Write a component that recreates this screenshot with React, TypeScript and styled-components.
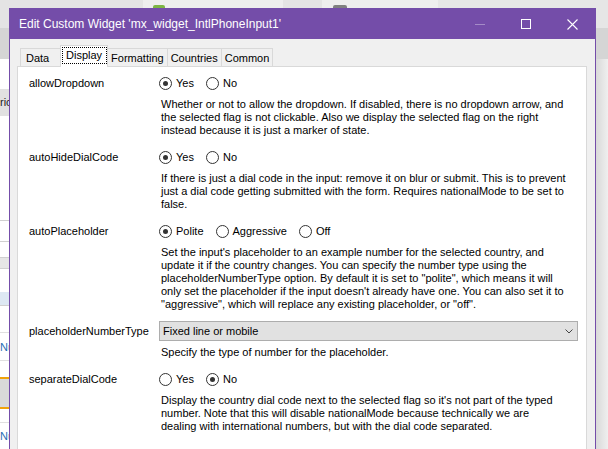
import styled, { createGlobalStyle } from "styled-components";

const GlobalStyle = createGlobalStyle`
    *, *::before, *::after {
        box-sizing: border-box;
    }
    html, body {
        margin: 0;
        padding: 0;
    }
    body {
        background: #e9e9e9;
        font-family: "Liberation Sans", Arial, sans-serif;
        font-size: 11px;
        color: #000;
        overflow: hidden;
    }
`;

type RadioControl = { kind: "radio"; options: string[]; value: string };
type SelectControl = { kind: "select"; value: string };

type Field = {
    name: string;
    control: RadioControl | SelectControl;
    help: string[];
};

const fields: Field[] = [
    {
        name: "allowDropdown",
        control: { kind: "radio", options: ["Yes", "No"], value: "Yes" },
        help: [
            "Whether or not to allow the dropdown. If disabled, there is no dropdown arrow, and",
            "the selected flag is not clickable. Also we display the selected flag on the right",
            "instead because it is just a marker of state.",
        ],
    },
    {
        name: "autoHideDialCode",
        control: { kind: "radio", options: ["Yes", "No"], value: "Yes" },
        help: [
            "If there is just a dial code in the input: remove it on blur or submit. This is to prevent",
            "just a dial code getting submitted with the form. Requires nationalMode to be set to",
            "false.",
        ],
    },
    {
        name: "autoPlaceholder",
        control: {
            kind: "radio",
            options: ["Polite", "Aggressive", "Off"],
            value: "Polite",
        },
        help: [
            "Set the input's placeholder to an example number for the selected country, and",
            "update it if the country changes. You can specify the number type using the",
            'placeholderNumberType option. By default it is set to "polite", which means it will',
            "only set the placeholder if the input doesn't already have one. You can also set it to",
            '"aggressive", which will replace any existing placeholder, or "off".',
        ],
    },
    {
        name: "placeholderNumberType",
        control: { kind: "select", value: "Fixed line or mobile" },
        help: ["Specify the type of number for the placeholder."],
    },
    {
        name: "separateDialCode",
        control: { kind: "radio", options: ["Yes", "No"], value: "No" },
        help: [
            "Display the country dial code next to the selected flag so it's not part of the typed",
            "number. Note that this will disable nationalMode because technically we are",
            "dealing with international numbers, but with the dial code separated.",
        ],
    },
];

const tabs = ["Data", "Display", "Formatting", "Countries", "Common"];

/* ---------- the application behind the dialog ---------- */

const Desktop = styled.div`
    position: relative;
    width: 608px;
    height: 449px;
    overflow: hidden;
`;

const Backdrop = styled.div`
    display: flex;
    flex-direction: column;
    height: 100%;
`;

const AppTopBar = styled.div`
    height: 30px;
    display: flex;
    align-items: flex-start;
    padding-top: 5px;
    background: linear-gradient(
        to right,
        #e4e4e4 0 143px,
        #eeeeee 143px 283px,
        #e4e4e4 283px 322px,
        #eeeeee 322px 438px,
        #e6e6e6 438px
    );
`;

const Marker = styled.div<{ $color: string; $width: number; $offset: number }>`
    width: ${(p) => p.$width}px;
    height: 4px;
    margin-left: ${(p) => p.$offset}px;
    border-radius: 2px 2px 0 0;
    background: ${(p) => p.$color};
`;

const AppRibbon = styled.div`
    height: 33px;
    background: #d5d5d5;
`;

const AppMain = styled.div`
    flex: 1;
    display: flex;
`;

const SidePanel = styled.div`
    width: 200px;
    display: flex;
    flex-direction: column;
    background: #fff;
`;

const SideRow = styled.div<{ $h: number; $bg?: string; $line?: string; $color?: string }>`
    height: ${(p) => p.$h}px;
    flex-shrink: 0;
    background: ${(p) => p.$bg || "#fff"};
    border-bottom: ${(p) => (p.$line ? `1px solid ${p.$line}` : "none")};
    color: ${(p) => p.$color || "#222"};
    line-height: ${(p) => p.$h}px;
    white-space: nowrap;
`;

const Canvas = styled.div`
    flex: 1;
    background: linear-gradient(
        to right,
        #f0f0f0 0,
        #f0f0f0 calc(100% - 12px),
        #d9d9d9 calc(100% - 12px),
        #efefef 100%
    );
`;

/* ---------- the dialog window ---------- */

const Window = styled.div`
    position: absolute;
    left: 9px;
    top: 8px;
    width: 587px;
    height: 460px;
    border: 1px solid #744da9;
    border-bottom: none;
    background: #f0f0f0;
    display: flex;
    flex-direction: column;
`;

const TitleBar = styled.div`
    height: 30px;
    flex-shrink: 0;
    display: flex;
    align-items: center;
    background: #744da9;
    color: #fff;
    padding-left: 9px;
`;

const Title = styled.div`
    flex: 1;
    font-size: 12px;
    white-space: nowrap;
`;

const ControlButton = styled.div`
    width: 46px;
    height: 30px;
    display: flex;
    align-items: center;
    justify-content: center;
`;

const Body = styled.div`
    flex: 1;
    display: flex;
    flex-direction: column;
    padding: 6px 8px 0 7px;
`;

const TabStrip = styled.div`
    height: 21px;
    display: flex;
    align-items: flex-end;
    padding-left: 3px;
`;

const Tab = styled.div<{ $active?: boolean }>`
    position: relative;
    min-width: 41px;
    height: ${(p) => (p.$active ? 22 : 18)}px;
    margin-bottom: ${(p) => (p.$active ? -1 : 0)}px;
    margin-left: -1px;
    padding: ${(p) => (p.$active ? "1px 0 0 1px" : "0 3px")};
    display: flex;
    align-items: ${(p) => (p.$active ? "flex-start" : "center")};
    border: 1px solid #d9d9d9;
    border-bottom: none;
    background: ${(p) => (p.$active ? "#fff" : "#f0f0f0")};
    z-index: ${(p) => (p.$active ? 1 : 0)};
    white-space: nowrap;
    &:first-child {
        margin-left: 0;
        padding-left: 5px;
    }
`;

const FocusLabel = styled.span`
    height: 17px;
    line-height: 15px;
    padding: 0 4px 0 3px;
    border: 1px dotted #000;
`;

const Panel = styled.div`
    flex: 1;
    background: #fff;
    border: 1px solid #d9d9d9;
    padding: 6px 8px 0 11px;
`;

const Row = styled.div`
    display: grid;
    grid-template-columns: 130px 1fr;
    margin-bottom: 10px;
`;

const Label = styled.div`
    height: 20px;
    line-height: 20px;
    white-space: nowrap;
`;

const Control = styled.div`
    height: 20px;
    display: flex;
    align-items: center;
`;

const Help = styled.div`
    grid-column: 2;
    margin-top: 5px;
    padding-left: 2px;
`;

const HelpLine = styled.div`
    height: 13px;
    line-height: 13px;
    white-space: nowrap;
`;

const RadioOption = styled.label`
    display: inline-flex;
    align-items: center;
    gap: 4px;
    margin-right: 12px;
    white-space: nowrap;
`;

const RadioCircle = styled.span<{ $checked: boolean }>`
    width: 13px;
    height: 13px;
    border-radius: 50%;
    border: 1px solid #333;
    background: #fff;
    display: flex;
    align-items: center;
    justify-content: center;
    &::after {
        content: "";
        display: ${(p) => (p.$checked ? "block" : "none")};
        width: 5px;
        height: 5px;
        border-radius: 50%;
        background: #333;
    }
`;

const Combo = styled.div`
    flex: 1;
    height: 20px;
    display: flex;
    align-items: center;
    justify-content: space-between;
    padding: 0 4px 0 3px;
    background: #e1e1e1;
    border: 1px solid #adadad;
    white-space: nowrap;
`;

const FieldControl = ({ control }: { control: RadioControl | SelectControl }) => {
    if (control.kind === "select") {
        return (
            <Combo>
                <span>{control.value}</span>
                <svg width="8" height="5" viewBox="0 0 8 5">
                    <polyline
                        points="0.5,0.5 4,4 7.5,0.5"
                        fill="none"
                        stroke="#444"
                        strokeWidth="1"
                    />
                </svg>
            </Combo>
        );
    }
    return (
        <>
            {control.options.map((option) => (
                <RadioOption key={option}>
                    <RadioCircle $checked={option === control.value} />
                    {option}
                </RadioOption>
            ))}
        </>
    );
};

const App = () => {
    return (
        <Desktop>
            <GlobalStyle />
            <Backdrop>
                <AppTopBar>
                    <Marker $color="#7db544" $width={12} $offset={153} />
                    <Marker $color="#808080" $width={14} $offset={168} />
                </AppTopBar>
                <AppRibbon />
                <AppMain>
                    <SidePanel>
                        <SideRow $h={30} />
                        <SideRow $h={27} $bg="#e1e1e1">ric</SideRow>
                        <SideRow $h={105} $line="#d0d0d0" />
                        <SideRow $h={21} $line="#d0d0d0" />
                        <SideRow $h={16} $line="#d0d0d0" />
                        <SideRow $h={11} $bg="#e6e6e6" $line="#d0d0d0" />
                        <SideRow $h={23} />
                        <SideRow $h={14} $bg="#dde8f3" $line="#d0d0d0" />
                        <SideRow $h={27} $line="#e0e0e0" />
                        <SideRow $h={28} $color="#1f6fb5" $line="#e0e0e0">Nu</SideRow>
                        <SideRow $h={16} />
                        <SideRow $h={2} $bg="#f0a30a" />
                        <SideRow $h={28} $bg="#d9d9d9" />
                        <SideRow $h={2} $bg="#f0a30a" />
                        <SideRow $h={14} $line="#e0e0e0" />
                        <SideRow $h={26} $color="#1f6fb5">Nu</SideRow>
                    </SidePanel>
                    <Canvas />
                </AppMain>
            </Backdrop>

            <Window>
                <TitleBar>
                    <Title>Edit Custom Widget 'mx_widget_IntlPhoneInput1'</Title>
                    <ControlButton>
                        <svg width="10" height="10" viewBox="0 0 10 10">
                            <line x1="0" y1="5.5" x2="10" y2="5.5" stroke="rgba(255,255,255,0.35)" strokeWidth="1" />
                        </svg>
                    </ControlButton>
                    <ControlButton>
                        <svg width="10" height="10" viewBox="0 0 10 10">
                            <rect x="0.5" y="0.5" width="9" height="9" fill="none" stroke="#fff" strokeWidth="1" />
                        </svg>
                    </ControlButton>
                    <ControlButton>
                        <svg width="11" height="11" viewBox="0 0 11 11">
                            <path d="M0.5,0.5 L10.5,10.5 M10.5,0.5 L0.5,10.5" stroke="#fff" strokeWidth="1.1" />
                        </svg>
                    </ControlButton>
                </TitleBar>
                <Body>
                    <TabStrip>
                        {tabs.map((tab) =>
                            tab === "Display" ? (
                                <Tab key={tab} $active>
                                    <FocusLabel>{tab}</FocusLabel>
                                </Tab>
                            ) : (
                                <Tab key={tab}>{tab}</Tab>
                            )
                        )}
                    </TabStrip>
                    <Panel>
                        {fields.map((field) => (
                            <Row key={field.name}>
                                <Label>{field.name}</Label>
                                <Control>
                                    <FieldControl control={field.control} />
                                </Control>
                                <Help>
                                    {field.help.map((line, index) => (
                                        <HelpLine key={index}>{line}</HelpLine>
                                    ))}
                                </Help>
                            </Row>
                        ))}
                    </Panel>
                </Body>
            </Window>
        </Desktop>
    );
};

export default App;
